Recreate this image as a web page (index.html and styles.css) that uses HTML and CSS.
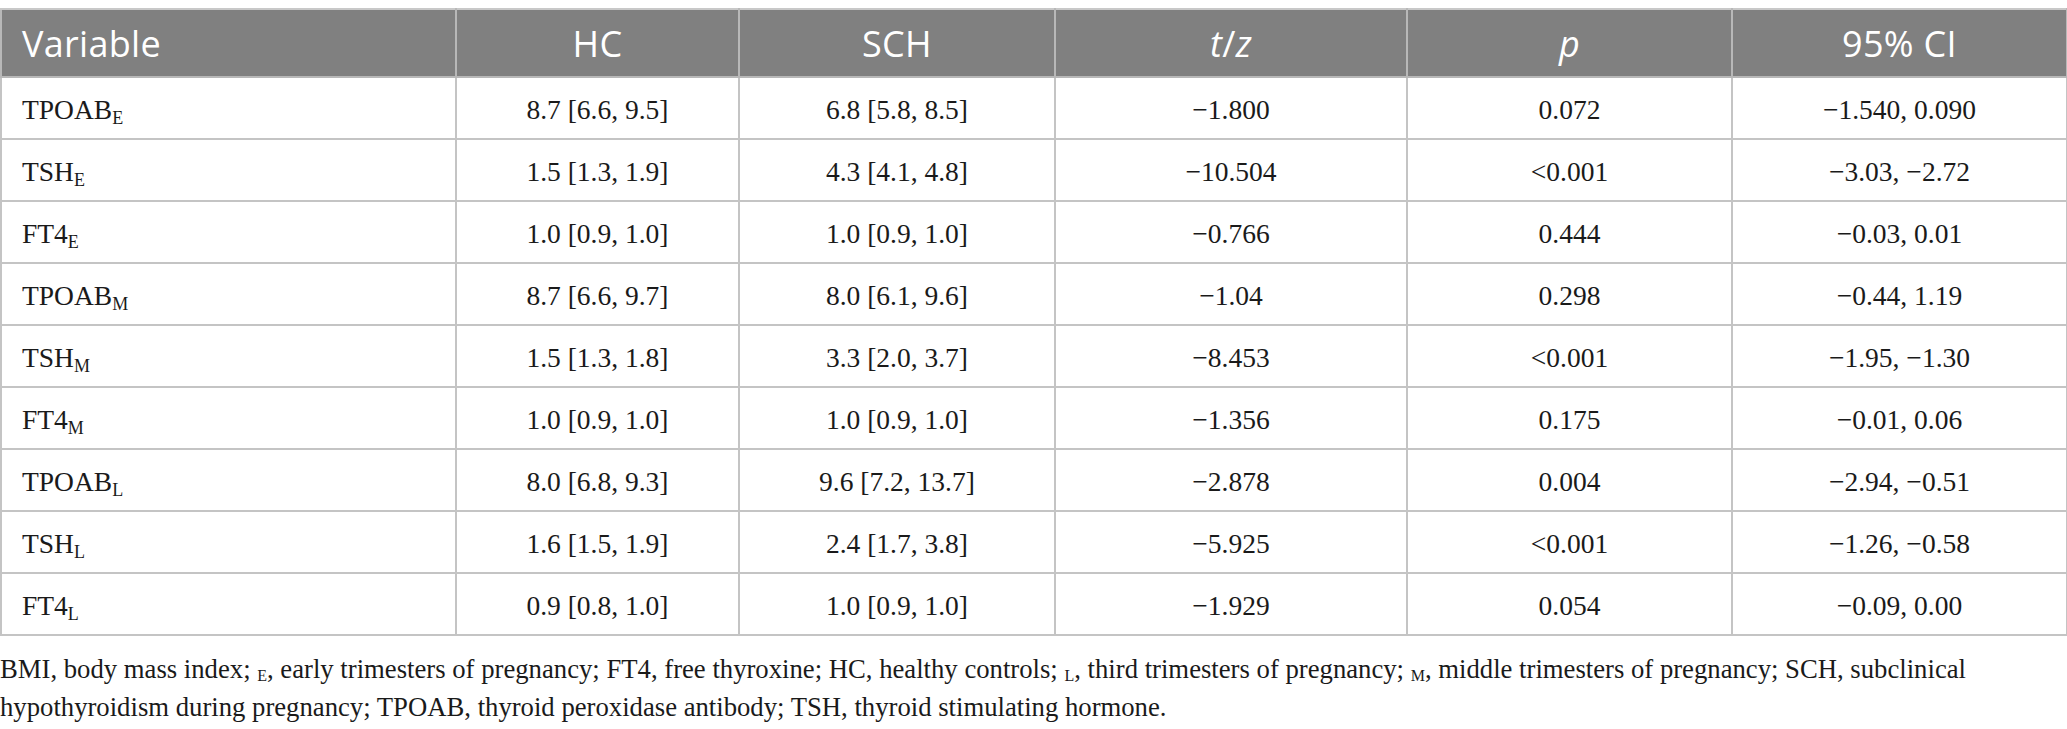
FILE: index.html
```html
<!DOCTYPE html>
<html>
<head>
<meta charset="utf-8">
<link rel="stylesheet" href="styles.css">
</head>
<body>
<div class="page">
<table class="data">
<colgroup>
<col class="c1"><col class="c2"><col class="c3"><col class="c4"><col class="c5"><col class="c6">
</colgroup>
<thead>
<tr><th class="left">Variable</th><th>HC</th><th>SCH</th><th><i>t</i>/<i>z</i></th><th><i>p</i></th><th>95% CI</th></tr>
</thead>
<tbody>
<tr><td class="left">TPOAB<sub>E</sub></td><td>8.7 [6.6, 9.5]</td><td>6.8 [5.8, 8.5]</td><td>−1.800</td><td>0.072</td><td>−1.540, 0.090</td></tr>
<tr><td class="left">TSH<sub>E</sub></td><td>1.5 [1.3, 1.9]</td><td>4.3 [4.1, 4.8]</td><td>−10.504</td><td>&lt;0.001</td><td>−3.03, −2.72</td></tr>
<tr><td class="left">FT4<sub>E</sub></td><td>1.0 [0.9, 1.0]</td><td>1.0 [0.9, 1.0]</td><td>−0.766</td><td>0.444</td><td>−0.03, 0.01</td></tr>
<tr><td class="left">TPOAB<sub>M</sub></td><td>8.7 [6.6, 9.7]</td><td>8.0 [6.1, 9.6]</td><td>−1.04</td><td>0.298</td><td>−0.44, 1.19</td></tr>
<tr><td class="left">TSH<sub>M</sub></td><td>1.5 [1.3, 1.8]</td><td>3.3 [2.0, 3.7]</td><td>−8.453</td><td>&lt;0.001</td><td>−1.95, −1.30</td></tr>
<tr><td class="left">FT4<sub>M</sub></td><td>1.0 [0.9, 1.0]</td><td>1.0 [0.9, 1.0]</td><td>−1.356</td><td>0.175</td><td>−0.01, 0.06</td></tr>
<tr><td class="left">TPOAB<sub>L</sub></td><td>8.0 [6.8, 9.3]</td><td>9.6 [7.2, 13.7]</td><td>−2.878</td><td>0.004</td><td>−2.94, −0.51</td></tr>
<tr><td class="left">TSH<sub>L</sub></td><td>1.6 [1.5, 1.9]</td><td>2.4 [1.7, 3.8]</td><td>−5.925</td><td>&lt;0.001</td><td>−1.26, −0.58</td></tr>
<tr><td class="left">FT4<sub>L</sub></td><td>0.9 [0.8, 1.0]</td><td>1.0 [0.9, 1.0]</td><td>−1.929</td><td>0.054</td><td>−0.09, 0.00</td></tr>
</tbody>
</table>
<p class="note">BMI, body mass index; <sub>E</sub>, early trimesters of pregnancy; FT4, free thyroxine; HC, healthy controls; <sub>L</sub>, third trimesters of pregnancy; <sub>M</sub>, middle trimesters of pregnancy; SCH, subclinical hypothyroidism during pregnancy; TPOAB, thyroid peroxidase antibody; TSH, thyroid stimulating hormone.</p>
</div>
</body>
</html>
```
FILE: styles.css
```css
html, body {
  margin: 0;
  padding: 0;
  background: #ffffff;
}
.page {
  padding-top: 8px;
  width: 2066px;
}
.data {
  border-collapse: collapse;
  width: 2066px;
  table-layout: fixed;
}
.c1 { width: 455px; }
.c2 { width: 283px; }
.c3 { width: 316px; }
.c4 { width: 352px; }
.c5 { width: 325px; }
.c6 { width: 335px; }
.data th {
  background: #808080;
  color: #ffffff;
  font-family: "Open Sans", "Noto Sans", sans-serif;
  font-weight: 400;
  font-size: 36px;
  letter-spacing: 0.3px;
  height: 68px;
  padding: 0 20px;
  text-align: center;
  border: 2px solid #b8b8b8;
  border-top-color: #c8c8c8;
  box-sizing: border-box;
}
.data td {
  font-family: "Liberation Serif", "Times New Roman", serif;
  font-size: 27.5px;
  color: #1a1a1a;
  height: 62px;
  padding: 3px 20px 0 20px;
  text-align: center;
  border: 2px solid #c4c4c4;
  box-sizing: border-box;
}
.data .left {
  text-align: left;
  padding-left: 20px;
}
.data td sub {
  font-size: 18px;
  vertical-align: -5px;
  line-height: 0;
}
.note {
  margin: 14px 0 0 0;
  font-family: "Liberation Serif", "Times New Roman", serif;
  font-size: 26.7px;
  line-height: 38px;
  color: #1a1a1a;
  width: 2010px;
}
.note sub {
  font-size: 16px;
  vertical-align: -3px;
  line-height: 0;
}
```
